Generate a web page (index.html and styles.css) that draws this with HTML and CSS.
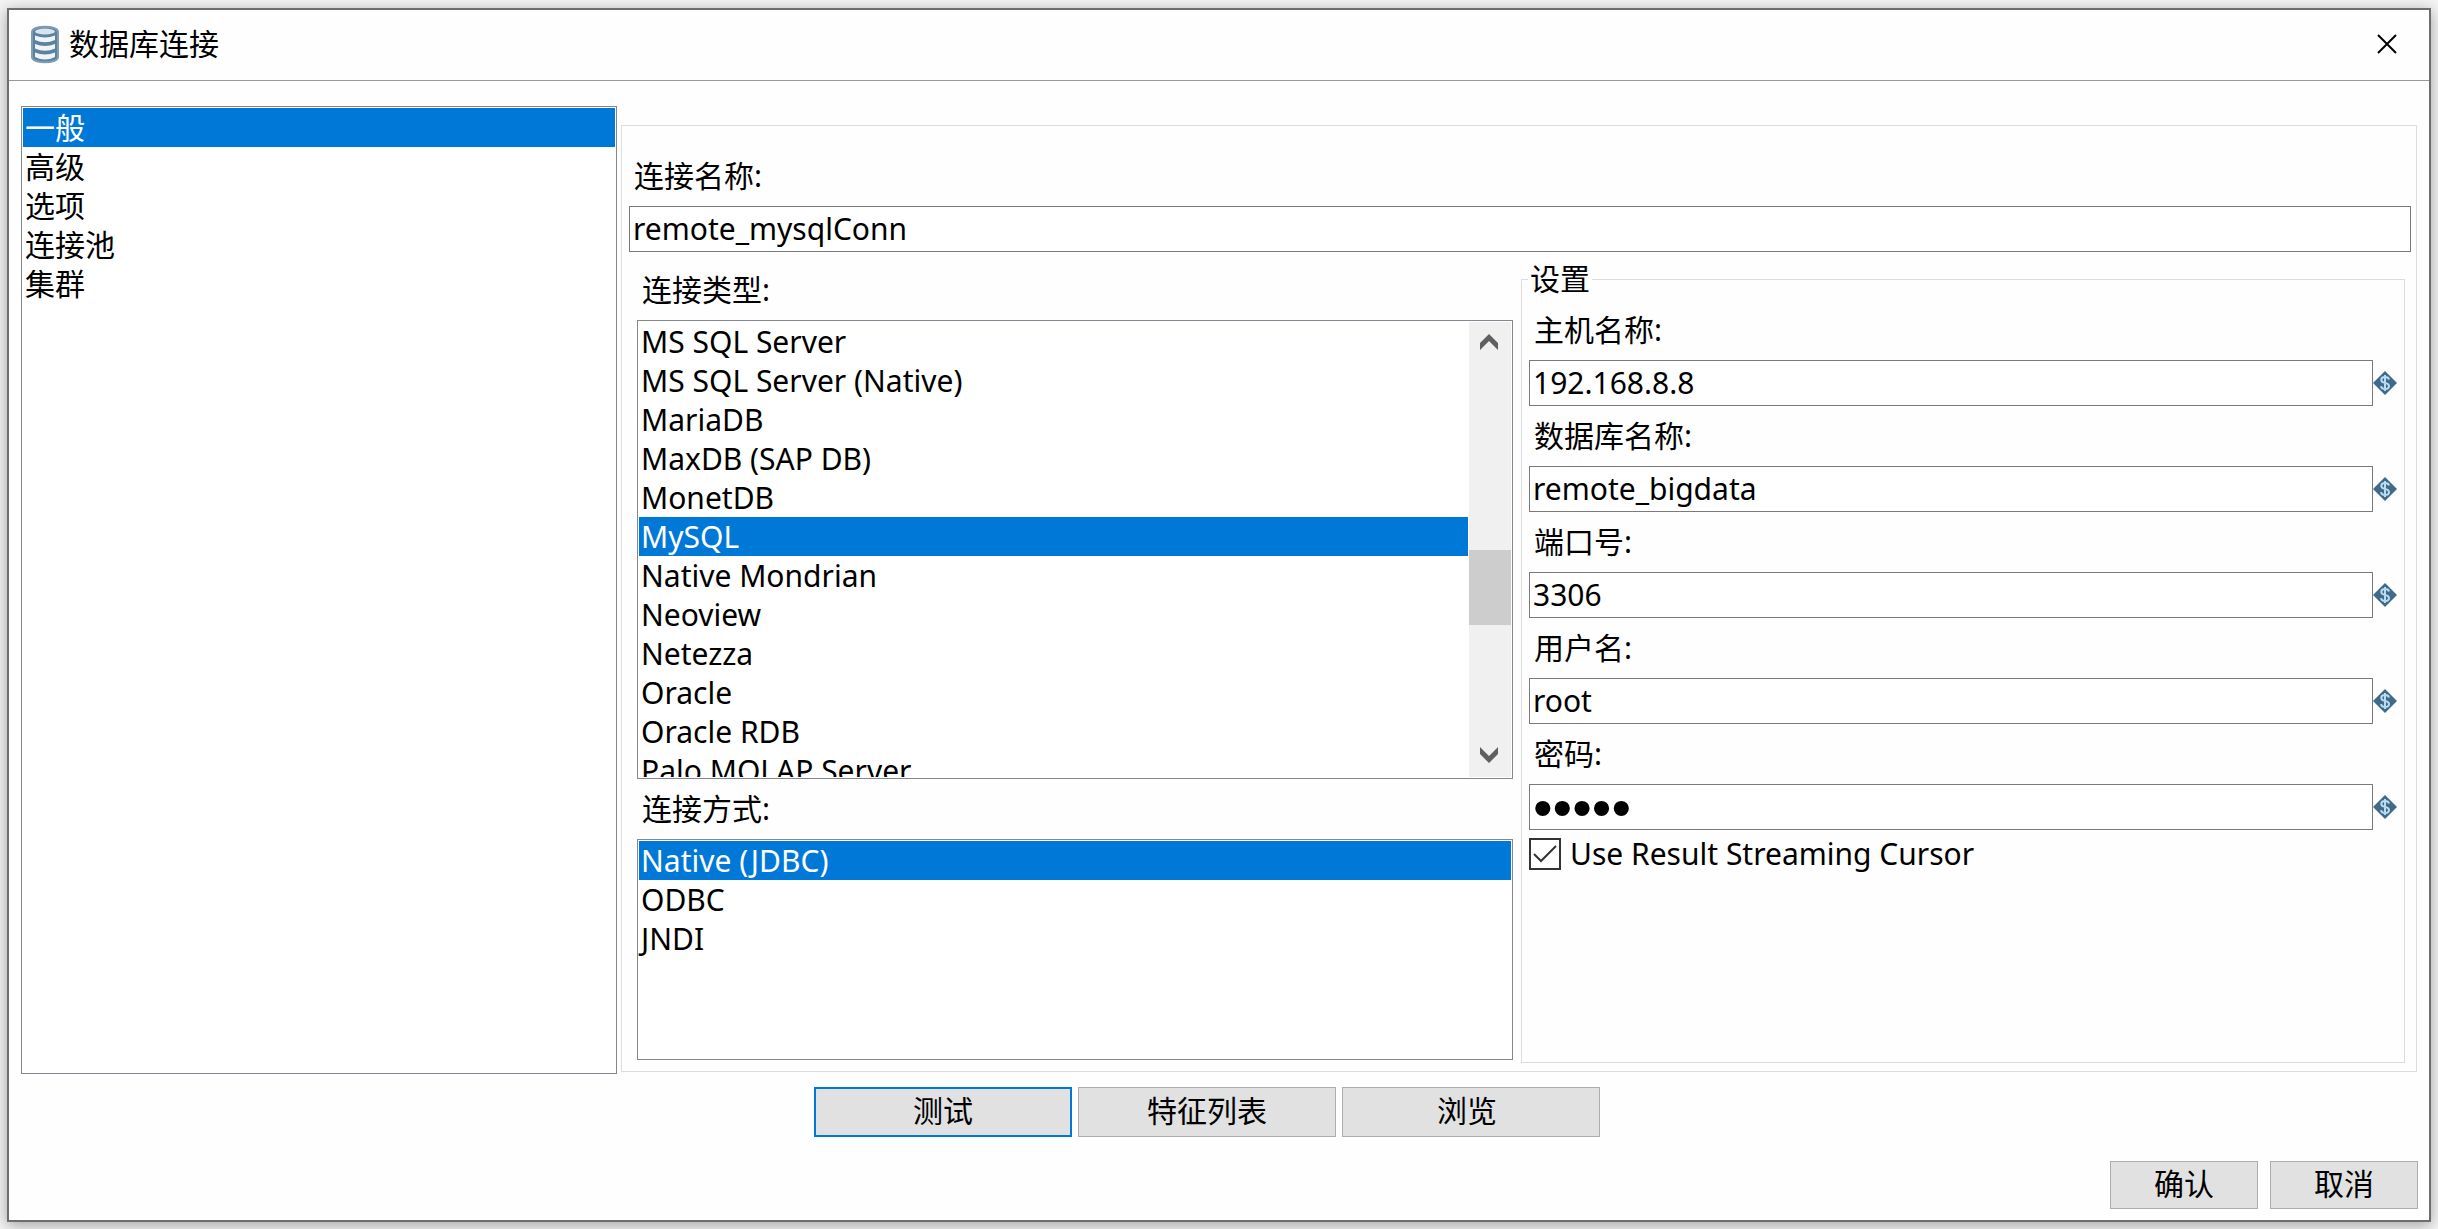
FILE: index.html
```html
<!DOCTYPE html>
<html lang="zh-CN">
<head>
  <meta charset="utf-8">
  <meta name="viewport" content="width=device-width, initial-scale=1">
  <title>数据库连接</title>
  <link rel="stylesheet" href="styles.css">
</head>
<body>
  <svg class="sprite" aria-hidden="true">
    <symbol id="variable" viewBox="0 0 24 24">
      <path d="M12 0 24 12 12 24 0 12Z" fill="#41698a"/>
      <path d="M16 8.500C15.500 6.500 14 6 12 6 9.500 6 8.300 7.300 8.300 8.900 8.300 13 16 10.800 16 15 16 17 14.300 18 12 18 9.800 18 8.300 17 8 15.200M12 4V20" fill="none" stroke="#b9dcf2" stroke-width="2"/>
    </symbol>
  </svg>
  <main class="dialog">
    <header class="titlebar">
      <svg class="db-icon" viewBox="0 0 30 39" aria-hidden="true">
        <path d="M2 7C2 0 28 0 28 7V32C28 39 2 39 2 32Z" fill="#5d829d" stroke="#7f9db3" stroke-width="2"/>
        <ellipse cx="15" cy="6.500" rx="10" ry="3" fill="#d5e4ee"/>
        <path d="M5 10.500Q15 14.500 25 10.500V15Q15 19.500 5 15Z" fill="#eef5fa"/>
        <path d="M5 19Q15 23 25 19V23.500Q15 28 5 23.500Z" fill="#eef5fa"/>
        <path d="M5 27.500Q15 31.500 25 27.500V32Q15 37 5 32Z" fill="#eef5fa"/>
      </svg>
      <h1 class="title">数据库连接</h1>
      <button class="close" type="button" aria-label="关闭">
        <svg viewBox="0 0 20 20" aria-hidden="true"><path d="M1 1 19 19M19 1 1 19" fill="none" stroke="#000" stroke-width="2"/></svg>
      </button>
    </header>

    <form class="form">
      <div class="content">
        <ul class="listbox" role="listbox" aria-label="类别">
          <li class="option selected" role="option" aria-selected="true">一般</li>
          <li class="option" role="option">高级</li>
          <li class="option" role="option">选项</li>
          <li class="option" role="option">连接池</li>
          <li class="option" role="option">集群</li>
        </ul>

        <section class="panel">
          <label class="label" for="conn-name">连接名称:</label>
          <input class="input" id="conn-name" type="text" value="remote_mysqlConn">

          <div class="columns">
            <div class="types">
              <span class="label" id="type-label">连接类型:</span>
              <div class="listbox scroll-list">
                <ul class="options" role="listbox" aria-labelledby="type-label">
                  <li class="option" role="option">MS SQL Server</li>
                  <li class="option" role="option">MS SQL Server (Native)</li>
                  <li class="option" role="option">MariaDB</li>
                  <li class="option" role="option">MaxDB (SAP DB)</li>
                  <li class="option" role="option">MonetDB</li>
                  <li class="option selected" role="option" aria-selected="true">MySQL</li>
                  <li class="option" role="option">Native Mondrian</li>
                  <li class="option" role="option">Neoview</li>
                  <li class="option" role="option">Netezza</li>
                  <li class="option" role="option">Oracle</li>
                  <li class="option" role="option">Oracle RDB</li>
                  <li class="option" role="option">Palo MOLAP Server</li>
                </ul>
                <div class="scrollbar">
                  <button class="scroll-button" type="button" aria-label="向上滚动">
                    <svg viewBox="0 0 18 16" aria-hidden="true"><path d="M0 9 9 0 18 9V16L9 7 0 16Z" fill="#606060"/></svg>
                  </button>
                  <div class="track"><div class="thumb"></div></div>
                  <button class="scroll-button" type="button" aria-label="向下滚动">
                    <svg viewBox="0 0 18 16" aria-hidden="true"><path d="M0 7 9 16 18 7V0L9 9 0 0Z" fill="#606060"/></svg>
                  </button>
                </div>
              </div>
              <span class="label" id="access-label">连接方式:</span>
              <ul class="listbox access-list" role="listbox" aria-labelledby="access-label">
                <li class="option selected" role="option" aria-selected="true">Native (JDBC)</li>
                <li class="option" role="option">ODBC</li>
                <li class="option" role="option">JNDI</li>
              </ul>
            </div>

            <fieldset class="settings">
              <legend class="legend">设置</legend>
              <label class="label" for="host">主机名称:</label>
              <div class="field"><input class="input" id="host" type="text" value="192.168.8.8"><svg class="variable"><use href="#variable"/></svg></div>
              <label class="label" for="database">数据库名称:</label>
              <div class="field"><input class="input" id="database" type="text" value="remote_bigdata"><svg class="variable"><use href="#variable"/></svg></div>
              <label class="label" for="port">端口号:</label>
              <div class="field"><input class="input" id="port" type="text" value="3306"><svg class="variable"><use href="#variable"/></svg></div>
              <label class="label" for="user">用户名:</label>
              <div class="field"><input class="input" id="user" type="text" value="root"><svg class="variable"><use href="#variable"/></svg></div>
              <label class="label" for="password">密码:</label>
              <div class="field"><input class="input password" id="password" type="password" value="12345"><svg class="variable"><use href="#variable"/></svg></div>
              <div class="check">
                <input class="checkbox" id="streaming" type="checkbox" checked>
                <label for="streaming">Use Result Streaming Cursor</label>
              </div>
            </fieldset>
          </div>
        </section>
      </div>

      <div class="tools">
        <button class="button default" type="button">测试</button>
        <button class="button" type="button">特征列表</button>
        <button class="button" type="button">浏览&nbsp;</button>
      </div>
      <footer class="actions">
        <button class="button" type="submit">确认</button>
        <button class="button" type="button">取消</button>
      </footer>
    </form>
  </main>
</body>
</html>
```

FILE: styles.css
```css
* {
  box-sizing: border-box;
}

body {
  display: flex;
  min-height: 100vh;
  margin: 0;
  padding: 8px 7px 7px;
  background: #f4f4f4;
  color: #000;
  font: 30px/40px "Noto Sans", "Noto Sans CJK SC", sans-serif;
}

input,
button {
  margin: 0;
  color: inherit;
  font: inherit;
}

.sprite {
  position: absolute;
  width: 0;
  height: 0;
}

.dialog {
  display: flex;
  flex: 1;
  flex-direction: column;
  min-width: 0;
  border: 2px solid #6e6e6e;
  background: #fefefe;
  box-shadow: 0 3px 14px rgba(0, 0, 0, 0.35);
}

.titlebar {
  display: flex;
  align-items: center;
  gap: 9px;
  height: 71px;
  padding: 0 32px 2px 21px;
  border-bottom: 1px solid #999;
}

.db-icon {
  width: 30px;
  height: 39px;
}

.title {
  flex: 1;
  margin: 0;
  font-size: 30px;
  font-weight: 400;
}

.close {
  display: flex;
  padding: 0;
  border: 0;
  background: none;
}

.close svg {
  width: 20px;
  height: 20px;
}

.form {
  display: flex;
  flex: 1;
  flex-direction: column;
}

.content {
  display: grid;
  flex: 1;
  grid-template-columns: minmax(0, 149fr) minmax(0, 449fr);
  gap: 4px;
  padding: 25px 12px 0;
}

.listbox {
  margin: 0;
  padding: 1px;
  border: 1px solid #828790;
  background: #fff;
  list-style: none;
}

.option {
  height: 39px;
  padding-left: 2px;
  line-height: 39px;
  white-space: nowrap;
}

.selected {
  background: #0078d7;
  color: #fff;
}

.panel {
  display: flex;
  flex-direction: column;
  margin: 19px 0 2px;
  padding: 20px 5px 8px 7px;
  border: 1px solid #dcdcdc;
}

.label {
  display: block;
  margin: 10px 0;
  padding-left: 5px;
}

.input {
  width: 100%;
  min-width: 0;
  height: 46px;
  padding: 0 3px 2px;
  border: 1px solid #7a7a7a;
  border-radius: 0;
  outline: 0;
  background: #fff;
}

.password {
  padding-bottom: 0;
  font-family: "Liberation Sans", sans-serif;
  font-size: 56px;
}

.columns {
  display: grid;
  flex: 1;
  grid-template-columns: minmax(0, 219fr) minmax(0, 221fr);
  gap: 8px;
  padding: 7px 6px 0 8px;
}

.types {
  display: flex;
  flex-direction: column;
  padding: 1px 0 3px;
}

.scroll-list {
  display: flex;
  flex: 23 1 0;
  gap: 1px;
  min-height: 200px;
}

.access-list {
  flex: 11 1 0;
}

.options {
  flex: 1;
  margin: 0;
  padding: 0;
  overflow: hidden;
  contain: size;
  list-style: none;
}

.scrollbar {
  display: flex;
  flex-direction: column;
  width: 42px;
  background: #f0f0f0;
}

.scroll-button {
  display: flex;
  align-items: center;
  justify-content: center;
  height: 42px;
  padding: 0 2px 2px 0;
  border: 0;
  background: none;
}

.scroll-button svg {
  width: 18px;
  height: 16px;
}

.track {
  flex: 1;
  padding-top: 186px;
}

.thumb {
  height: 75px;
  background: #cdcdcd;
}

.settings {
  min-width: 0;
  margin: 0;
  padding: 1px 7px 8px;
  border: 1px solid #dcdcdc;
}

.legend {
  margin-left: -1px;
  padding: 0 2px;
}

.field {
  display: flex;
  align-items: center;
}

.variable {
  flex: none;
  width: 24px;
  height: 24px;
}

.check {
  display: flex;
  align-items: center;
  gap: 9px;
  margin-top: 4px;
}

.checkbox {
  width: 32px;
  height: 32px;
  appearance: none;
  border: 2px solid #333;
  background: #fff url("data:image/svg+xml,%3Csvg xmlns='http://www.w3.org/2000/svg' viewBox='0 0 28 28'%3E%3Cpath d='M3 14l7 7L25 6' fill='none' stroke='%23333' stroke-width='2'/%3E%3C/svg%3E") center / 28px no-repeat;
}

.button {
  height: 48px;
  padding: 0 0 2px;
  border: 1px solid #adadad;
  background: #e1e1e1;
}

.tools {
  display: flex;
  justify-content: center;
  gap: 6px;
  padding: 13px 24px 24px 0;
}

.tools .button {
  width: 258px;
  height: 50px;
}

.tools .default {
  border: 2px solid #0078d7;
}

.actions {
  display: flex;
  justify-content: flex-end;
  gap: 12px;
  padding: 0 11px 11px;
}

.actions .button {
  width: 148px;
}
```
